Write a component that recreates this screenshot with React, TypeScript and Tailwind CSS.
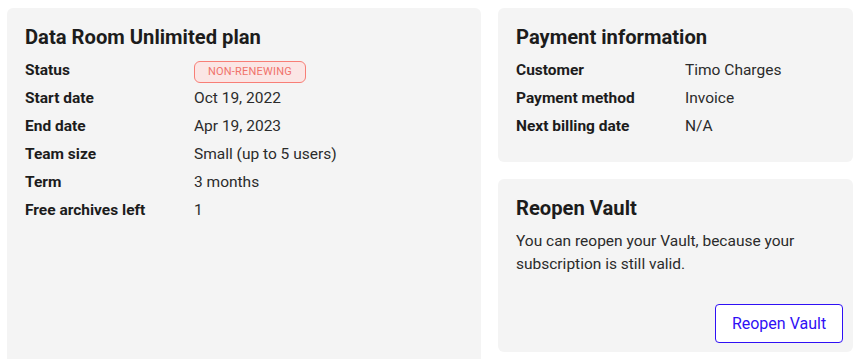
import React from 'react';

const Row: React.FC<{ label: string; children: React.ReactNode }> = ({ label, children }) => (
  <div className="flex items-center h-[28px]">
    <div className="w-[169px] shrink-0 font-bold text-[#1c1c1c]">{label}</div>
    <div className="text-[#2b2b2b]">{children}</div>
  </div>
);

const App: React.FC = () => {
  return (
    <div className="flex gap-[17px] px-[7px] pt-[8px] bg-white text-[15.5px] font-['Roboto',sans-serif] h-[359px] overflow-hidden">
      {/* Plan card */}
      <section className="w-[474px] h-[380px] shrink-0 bg-[#f4f4f4] rounded-[6px] px-[18px] pt-[15px]">
        <h2 className="text-[20.2px] leading-[28px] font-bold text-[#1c1c1c]">Data Room Unlimited plan</h2>
        <div className="mt-[6px]">
          <Row label="Status">
            <span className="inline-flex items-center h-[22px] px-[13px] rounded-[6px] border border-[#f87e76] bg-[#fbe6e5] text-[11px] text-[#f0736b] tracking-[0.2px]">
              NON-RENEWING
            </span>
          </Row>
          <Row label="Start date">Oct 19, 2022</Row>
          <Row label="End date">Apr 19, 2023</Row>
          <Row label="Team size">Small (up to 5 users)</Row>
          <Row label="Term">3 months</Row>
          <Row label="Free archives left">1</Row>
        </div>
      </section>

      {/* Right column */}
      <div className="w-[355px] shrink-0 flex flex-col gap-[17px]">
        <section className="bg-[#f4f4f4] rounded-[6px] px-[18px] pt-[15px] pb-[21px]">
          <h2 className="text-[20.2px] leading-[28px] font-bold text-[#1c1c1c]">Payment information</h2>
          <div className="mt-[6px]">
            <Row label="Customer">Timo Charges</Row>
            <Row label="Payment method">Invoice</Row>
            <Row label="Next billing date">N/A</Row>
          </div>
        </section>

        <section className="bg-[#f4f4f4] rounded-[6px] pl-[18px] pr-[10px] pt-[15px] pb-[9px]">
          <h2 className="text-[20.2px] leading-[28px] font-bold text-[#1c1c1c]">Reopen Vault</h2>
          <p className="mt-[8px] leading-[23px] text-[#2b2b2b] pr-[30px]">
            You can reopen your Vault, because your subscription is still valid.
          </p>
          <div className="flex justify-end mt-[28px]">
            <button className="w-[128px] h-[39px] rounded-[4px] border border-[#2f10f5] bg-white text-[#2f10f5] text-[16px]">
              Reopen Vault
            </button>
          </div>
        </section>
      </div>
    </div>
  );
};

export default App;
